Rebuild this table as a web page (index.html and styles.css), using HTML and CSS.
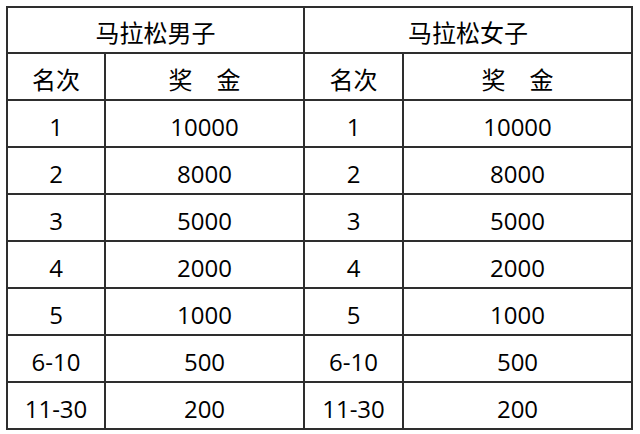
FILE: index.html
```html
<!DOCTYPE html>
<html lang="zh-CN">
<head>
<meta charset="utf-8">
<title>马拉松奖金</title>
<link rel="stylesheet" href="styles.css">
</head>
<body>
<table class="prize">
  <colgroup>
    <col class="c-rank">
    <col class="c-money">
    <col class="c-rank2">
    <col class="c-money2">
  </colgroup>
  <thead>
    <tr class="title-row">
      <th colspan="2">马拉松男子</th>
      <th colspan="2">马拉松女子</th>
    </tr>
    <tr>
      <th>名次</th>
      <th>奖　金</th>
      <th>名次</th>
      <th>奖　金</th>
    </tr>
  </thead>
  <tbody>
    <tr><td>1</td><td>10000</td><td>1</td><td>10000</td></tr>
    <tr><td>2</td><td>8000</td><td>2</td><td>8000</td></tr>
    <tr><td>3</td><td>5000</td><td>3</td><td>5000</td></tr>
    <tr><td>4</td><td>2000</td><td>4</td><td>2000</td></tr>
    <tr><td>5</td><td>1000</td><td>5</td><td>1000</td></tr>
    <tr><td>6-10</td><td>500</td><td>6-10</td><td>500</td></tr>
    <tr><td>11-30</td><td>200</td><td>11-30</td><td>200</td></tr>
  </tbody>
</table>
</body>
</html>
```
FILE: styles.css
```css
html, body {
  margin: 0;
  padding: 0;
  background: #ffffff;
}

.prize {
  margin: 6px 0 0 6px;
  border-collapse: collapse;
  table-layout: fixed;
  width: 627px;
  font-family: "Open Sans", "Noto Sans CJK SC", sans-serif;
  font-size: 24px;
  color: #000000;
}

.c-rank { width: 98px; }
.c-money { width: 199px; }
.c-rank2 { width: 99px; }
.c-money2 { width: 229px; }

.prize th,
.prize td {
  border: 2px solid #2e2e2e;
  height: 47px;
  padding: 6px 0 0 0;
  box-sizing: border-box;
  text-align: center;
  vertical-align: middle;
  font-weight: normal;
  line-height: 30px;
}

.title-row th {
  height: 46px;
}
```
